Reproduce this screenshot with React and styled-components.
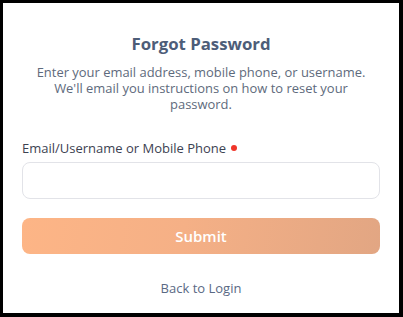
import React from "react";
import styled, { createGlobalStyle } from "styled-components";

const Global = createGlobalStyle`
  html, body { margin: 0; padding: 0; background: #000; }
  * { box-sizing: border-box; }
`;

const Frame = styled.div`
  width: 403px;
  height: 317px;
  border-style: solid;
  border-color: #000;
  border-width: 3px 4px 4px 3px;
  background: #fff;
  font-family: "Open Sans", "Liberation Sans", sans-serif;
  display: flex;
  flex-direction: column;
  align-items: stretch;
  padding: 31px 19px 0 19px;
`;

const Title = styled.h1`
  margin: 0;
  text-align: center;
  font-size: 16.8px;
  font-weight: 700;
  color: #4d5d78;
  line-height: 20px;
`;

const Subtitle = styled.p`
  margin: 10px 10px 0;
  text-align: center;
  font-size: 12.95px;
  line-height: 16px;
  color: #5e6a7c;
`;

const Label = styled.label`
  margin-top: 28px;
  display: flex;
  align-items: center;
  gap: 5px;
  font-size: 13px;
  line-height: 16px;
  color: #3c4252;
`;

const Dot = styled.span`
  width: 6px;
  height: 6px;
  border-radius: 50%;
  background: #f0352a;
`;

const Input = styled.input`
  margin-top: 6px;
  height: 37px;
  border: 1px solid #e2e3e8;
  border-radius: 8px;
  outline: none;
  padding: 0 12px;
  font: inherit;
`;

const Button = styled.button`
  margin-top: 19px;
  height: 36px;
  border: none;
  border-radius: 8px;
  background: linear-gradient(100deg, #fdb586 0%, #f5b086 45%, #e2a683 100%);
  color: #fff;
  font-family: inherit;
  font-size: 15px;
  font-weight: 600;
`;

const Back = styled.a`
  margin-top: 25px;
  align-self: center;
  font-size: 13px;
  color: #5a6984;
  text-decoration: none;
`;

export default function App() {
  return (
    <>
      <Global />
      <Frame>
        <Title>Forgot Password</Title>
        <Subtitle>
          Enter your email address, mobile phone, or username. We'll email you
          instructions on how to reset your password.
        </Subtitle>
        <Label>
          Email/Username or Mobile Phone <Dot />
        </Label>
        <Input />
        <Button>Submit</Button>
        <Back href="#">Back to Login</Back>
      </Frame>
    </>
  );
}
